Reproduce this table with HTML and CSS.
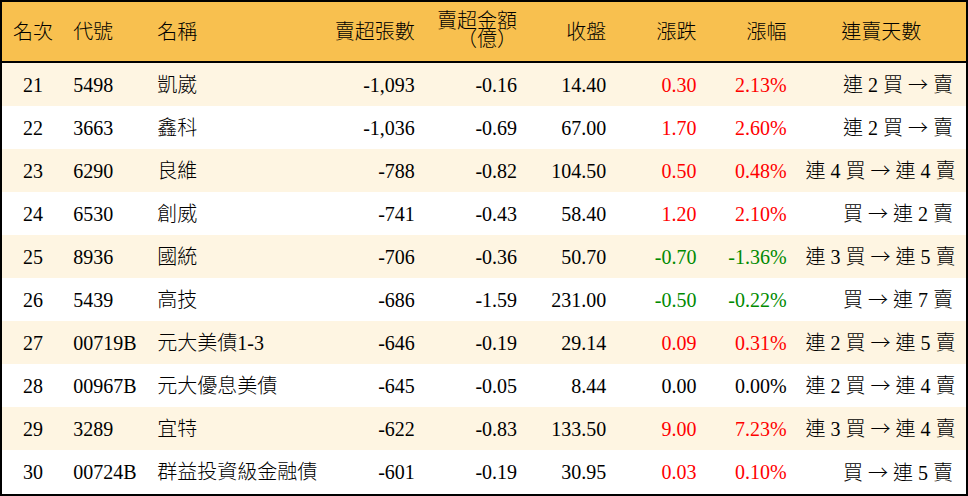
FILE: index.html
```html
<!DOCTYPE html>
<html lang="zh-Hant">
<head>
<meta charset="utf-8">
<title>賣超排行</title>
<link rel="stylesheet" href="styles.css">
</head>
<body>
<table class="rank">
  <colgroup>
    <col class="c-rank"><col class="c-code"><col class="c-name"><col class="c-vol"><col class="c-amt"><col class="c-close"><col class="c-chg"><col class="c-pct"><col class="c-days">
  </colgroup>
  <thead>
    <tr>
      <th class="center">名次</th>
      <th class="left">代號</th>
      <th class="left">名稱</th>
      <th class="right">賣超張數</th>
      <th class="right two"><span class="ln">賣超金額</span><span class="ln">（億）</span></th>
      <th class="right">收盤</th>
      <th class="right">漲跌</th>
      <th class="right">漲幅</th>
      <th class="center">連賣天數</th>
    </tr>
  </thead>
  <tbody>
    <tr><td class="center">21</td><td>5498</td><td>凱崴</td><td class="right">-1,093</td><td class="right">-0.16</td><td class="right">14.40</td><td class="right up">0.30</td><td class="right up">2.13%</td><td class="right days">連 2 買 <span class="arr">→</span> 賣</td></tr>
    <tr><td class="center">22</td><td>3663</td><td>鑫科</td><td class="right">-1,036</td><td class="right">-0.69</td><td class="right">67.00</td><td class="right up">1.70</td><td class="right up">2.60%</td><td class="right days">連 2 買 <span class="arr">→</span> 賣</td></tr>
    <tr><td class="center">23</td><td>6290</td><td>良維</td><td class="right">-788</td><td class="right">-0.82</td><td class="right">104.50</td><td class="right up">0.50</td><td class="right up">0.48%</td><td class="right days">連 4 買 <span class="arr">→</span> 連 4 賣</td></tr>
    <tr><td class="center">24</td><td>6530</td><td>創威</td><td class="right">-741</td><td class="right">-0.43</td><td class="right">58.40</td><td class="right up">1.20</td><td class="right up">2.10%</td><td class="right days">買 <span class="arr">→</span> 連 2 賣</td></tr>
    <tr><td class="center">25</td><td>8936</td><td>國統</td><td class="right">-706</td><td class="right">-0.36</td><td class="right">50.70</td><td class="right down">-0.70</td><td class="right down">-1.36%</td><td class="right days">連 3 買 <span class="arr">→</span> 連 5 賣</td></tr>
    <tr><td class="center">26</td><td>5439</td><td>高技</td><td class="right">-686</td><td class="right">-1.59</td><td class="right">231.00</td><td class="right down">-0.50</td><td class="right down">-0.22%</td><td class="right days">買 <span class="arr">→</span> 連 7 賣</td></tr>
    <tr><td class="center">27</td><td>00719B</td><td>元大美債1-3</td><td class="right">-646</td><td class="right">-0.19</td><td class="right">29.14</td><td class="right up">0.09</td><td class="right up">0.31%</td><td class="right days">連 2 買 <span class="arr">→</span> 連 5 賣</td></tr>
    <tr><td class="center">28</td><td>00967B</td><td>元大優息美債</td><td class="right">-645</td><td class="right">-0.05</td><td class="right">8.44</td><td class="right">0.00</td><td class="right">0.00%</td><td class="right days">連 2 買 <span class="arr">→</span> 連 4 賣</td></tr>
    <tr><td class="center">29</td><td>3289</td><td>宜特</td><td class="right">-622</td><td class="right">-0.83</td><td class="right">133.50</td><td class="right up">9.00</td><td class="right up">7.23%</td><td class="right days">連 3 買 <span class="arr">→</span> 連 4 賣</td></tr>
    <tr><td class="center">30</td><td>00724B</td><td>群益投資級金融債</td><td class="right">-601</td><td class="right">-0.19</td><td class="right">30.95</td><td class="right up">0.03</td><td class="right up">0.10%</td><td class="right days">買 <span class="arr">→</span> 連 5 賣</td></tr>
  </tbody>
</table>
</body>
</html>
```
FILE: styles.css
```css
html, body {
  margin: 0;
  padding: 0;
  background: #ffffff;
}

.rank {
  width: 968px;
  table-layout: fixed;
  border-collapse: separate;
  border-spacing: 0;
  border: 2px solid #000;
  font-family: "Liberation Serif", "Noto Sans CJK TC", serif;
  font-size: 20px;
  font-weight: 300;
  color: #000;
}

.c-rank { width: 62px; }
.c-code { width: 84px; }
.c-name { width: 170px; }
.c-vol { width: 106px; }
.c-amt { width: 102px; }
.c-close { width: 89px; }
.c-chg { width: 90px; }
.c-pct { width: 90px; }
.c-days { width: 169px; }

.rank th {
  background: #f8c04f;
  height: 61px;
  padding: 0 10px 0 9px;
  border-bottom: 2px solid #000;
  font-weight: 300;
  line-height: 22px;
  vertical-align: middle;
  box-sizing: border-box;
  white-space: nowrap;
}

.rank th.two {
  padding-bottom: 3px;
}

.ln {
  display: block;
  line-height: 18px;
  height: 18px;
}

.rank td {
  height: 43px;
  padding: 0 10px 0 9px;
  vertical-align: middle;
  white-space: nowrap;
  line-height: 22px;
  box-sizing: border-box;
}

.rank tbody tr:nth-child(odd) td {
  background: #fef5e2;
}

.rank tbody tr:last-child td {
  height: 44px;
}

.left { text-align: left; }
.right { text-align: right; }
.center { text-align: center; }

.rank th.center, .rank td.center { padding: 0; }

.rank td.days { padding-right: 13px; }

.arr {
  font-family: "Noto Sans CJK TC", sans-serif;
  font-size: 20px;
}

.up { color: #ff0000; }
.down { color: #008a00; }
```
